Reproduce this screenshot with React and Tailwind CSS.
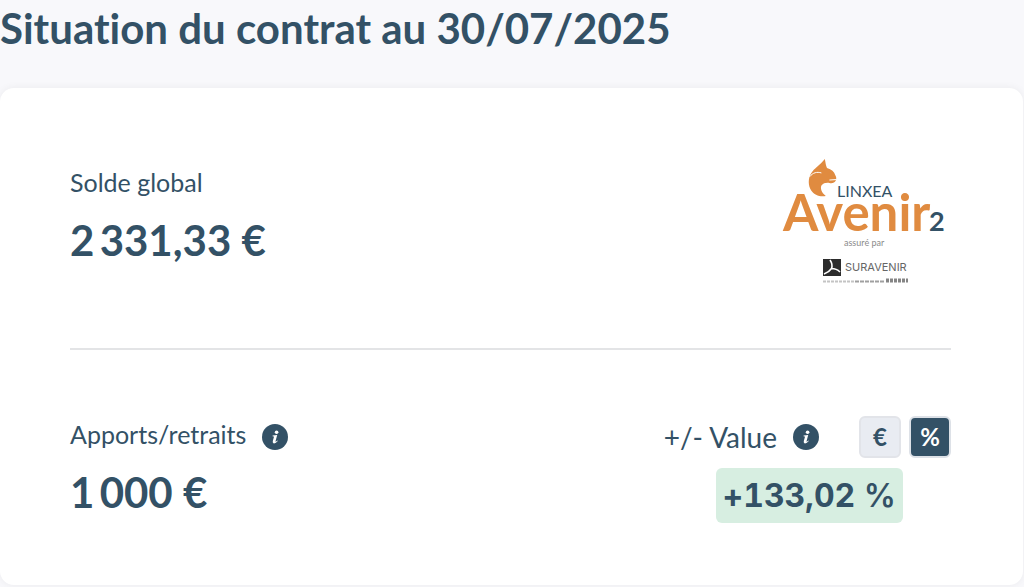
import React, { useState } from 'react';

const InfoButton = ({ label }) => (
    <button type="button" aria-label={label} className="w-[26px] h-[26px] shrink-0">
        <svg viewBox="0 0 26 26" className="w-full h-full">
            <circle cx="13" cy="13" r="13" fill="#335166" />
            <circle cx="14.6" cy="8.2" r="1.8" fill="#fff" />
            <path d="M10.6 11.4 L15.2 10.9 L13.6 17 Q13.4 18 14.1 17.6 L15.4 16.6 L15.8 17.1 Q13.7 19.6 11.8 19.4 Q10.3 19.1 10.8 17.1 L12 12.8 Q12.1 12.2 10.5 12.2 Z" fill="#fff" />
        </svg>
    </button>
);

const ContractLogo = () => (
    <svg viewBox="0 0 171 132" className="w-[171px] h-[132px] shrink-0" role="img" aria-label="Linxea Avenir 2, assuré par Suravenir">
        {/* squirrel */}
        <path
            d="M44.8 1 C45.6 4.5 45.8 7.5 47 10 C51.5 11.4 54.4 13.6 55.2 17 C56.4 19 56.6 20.6 55.8 22.5 C54.6 24.6 52.5 25.6 49.5 25 C46.5 24.4 43.2 25.1 41.6 27.3 C40 29.9 41.2 34.4 45.8 38 C40.2 39.3 34.2 37 31.2 32.5 C28 27.5 28 20.5 31 15.5 C34 10.4 40.5 6.6 44.8 1 Z"
            fill="#e08b40"
        />
        <path d="M29.8 18.5 C33 14.5 37 13.6 41 14.8 M49.8 22 L55.8 21.6" fill="none" stroke="#fff" strokeWidth="1" strokeLinecap="round" />
        <text x="57" y="39" fontSize="16" fill="#335166" className="font-[Lato]">LINXEA</text>
        <text x="3" y="73" fontSize="51" fontWeight="700" fill="#e08b40" className="font-[Lato]">Avenir</text>
        <text x="149" y="73" fontSize="27" fontWeight="700" fill="#335166" className="font-[Lato]">2</text>
        <text x="64" y="88" fontSize="9" fill="#8b8b8b" className="font-[Lato]">assuré par</text>
        {/* insurer mark */}
        <rect x="43" y="101" width="18" height="17" fill="#2c2c2c" />
        <path d="M50 102 C52 105 52.5 108 51.5 110.5 C49.5 113.5 47 115 44 116 M51.5 110.5 C54.5 110.5 57.5 111.5 60 114" fill="none" stroke="#fff" strokeWidth="1.6" />
        <text x="65" y="113" fontSize="11" fill="#666" className="font-[Inter]">SURAVENIR</text>
        <path d="M43 123.5 H74" stroke="#c4c4c4" strokeWidth="2" strokeDasharray="3 1" />
        <path d="M75 123.5 H105" stroke="#a0a0a0" strokeWidth="2" strokeDasharray="4 1" />
        <path d="M106 122.5 H128" stroke="#858585" strokeWidth="4" strokeDasharray="3 1" />
    </svg>
);

const App = () => {
    const [unit, setUnit] = useState('percent');

    const unitClass = (active) =>
        active
            ? 'bg-[#335166] text-white border-[#dde1e7]'
            : 'bg-[#e9ecf2] text-[#335166] border-[#e2e4e9]';

    return (
        <main className="min-h-screen bg-[#f8f8fb] pt-1 pb-[2px] pr-px font-['Lato',sans-serif] text-[#335166] [font-variant-ligatures:none]">
            <h1 className="text-[42px] leading-[48px] font-bold">Situation du contrat au 30/07/2025</h1>

            <section className="mt-9 rounded-[14px] bg-white pl-[70px] pr-[72px] pt-[70px] pb-[62px] shadow-[0_0_8px_rgba(0,0,0,0.06)]">
                <div className="flex items-start justify-between pb-[58px] border-b-2 border-[#e3e4e6]">
                    <div className="pt-2">
                        <h2 className="text-[25px] leading-8">Solde global</h2>
                        <p className="mt-4 text-[42px] leading-[52px] font-bold">2{'\u2009'}331,33 €</p>
                    </div>
                    <ContractLogo />
                </div>

                <div className="flex items-start justify-between pt-16">
                    <div>
                        <div className="flex items-center gap-4 h-[46px]">
                            <h2 className="pb-1.5 text-[25px] leading-8">Apports/retraits</h2>
                            <InfoButton label="Détail des apports et retraits" />
                        </div>
                        <p className="mt-1.5 text-[42px] leading-[52px] font-bold">1{'\u2009'}000 €</p>
                    </div>

                    <div className="flex flex-col">
                        <div className="flex items-center h-[46px]">
                            <h2 className="text-[28px] leading-8">+/- Value</h2>
                            <span className="ml-4 flex"><InfoButton label="Détail de la plus ou moins value" /></span>
                            <div className="ml-10 flex gap-2">
                                <button
                                    type="button"
                                    aria-pressed={unit === 'euro'}
                                    onClick={() => setUnit('euro')}
                                    className={`w-[42px] h-[42px] rounded-md border-2 text-[24px] leading-8 font-bold ${unitClass(unit === 'euro')}`}
                                >
                                    €
                                </button>
                                <button
                                    type="button"
                                    aria-pressed={unit === 'percent'}
                                    onClick={() => setUnit('percent')}
                                    className={`w-[42px] h-[42px] rounded-md border-2 text-[24px] leading-8 font-bold ${unitClass(unit === 'percent')}`}
                                >
                                    %
                                </button>
                            </div>
                        </div>
                        <p className="mt-2 mr-12 self-end rounded-md bg-[#d7eee1] px-[7px] text-[32px] leading-[55px] font-bold tabular-nums font-['Inter',sans-serif]">
                            {unit === 'percent' ? '+133,02' : '+1\u202f331,33'} <span className="font-semibold">{unit === 'percent' ? '%' : '€'}</span>
                        </p>
                    </div>
                </div>
            </section>
        </main>
    );
};

export default App;
